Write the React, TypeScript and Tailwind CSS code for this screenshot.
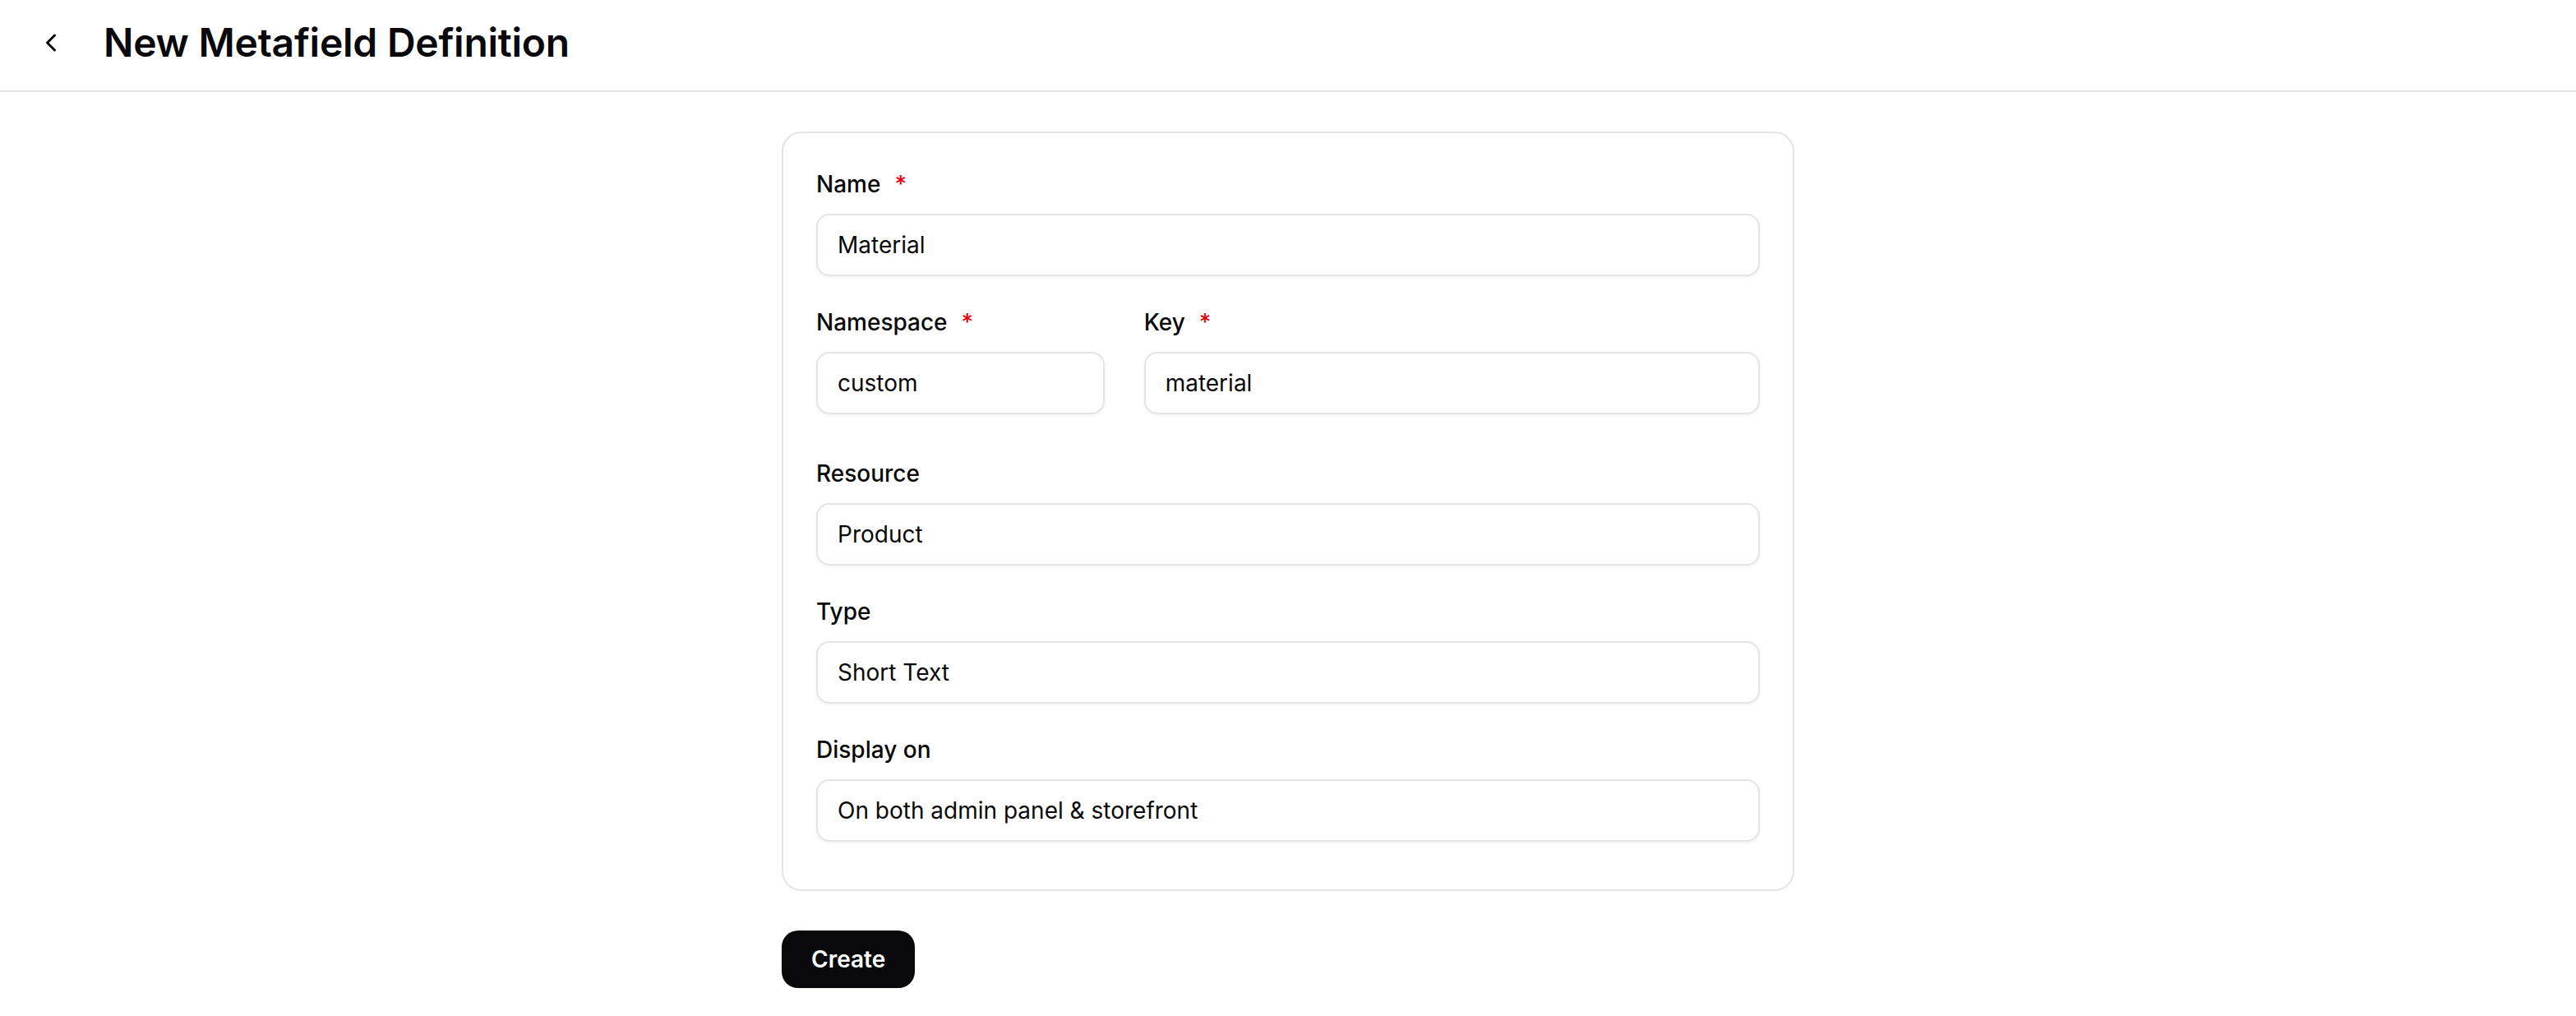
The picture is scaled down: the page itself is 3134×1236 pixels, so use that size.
import React from 'react';
import { ChevronLeft } from 'lucide-react';

interface Field {
  label: string;
  value: string;
  required?: boolean;
}

function Label({ label, required }: { label: string; required?: boolean }) {
  return (
    <label className="flex items-center text-[28px] font-medium leading-[40px]">
      {label}
      {required && <span className="ml-[17px] text-[#e7000b]">*</span>}
    </label>
  );
}

function TextField({ label, value, required }: Field) {
  return (
    <div className="flex flex-col gap-[16px]">
      <Label label={label} required={required} />
      <input
        readOnly
        value={value}
        className="h-[76px] w-full rounded-[16px] border-2 border-[#e4e4e7] bg-white px-[24px] text-[28px] text-[#09090b] shadow-[0_2px_4px_rgba(0,0,0,0.05)] outline-none"
      />
    </div>
  );
}

function App() {
  return (
    <div className="min-h-screen bg-white font-['Inter',sans-serif] text-[#09090b]">
      <header className="flex h-[112px] items-center border-b-2 border-[#e4e4e7] pb-[7px] pl-[44px]">
        <button className="flex items-center justify-center text-[#09090b]">
          <ChevronLeft size={36} strokeWidth={2} />
        </button>
        <h1 className="ml-[46px] text-[48px] font-semibold leading-none tracking-[-0.25px]">
          New Metafield Definition
        </h1>
      </header>

      <main className="mx-auto w-[1232px] pt-[48px]">
        <div className="flex flex-col gap-[36px] rounded-[24px] border-2 border-[#e4e4e7] px-[40px] pb-[58px] pt-[42px]">
          <TextField label="Name" value="Material" required />
          <div className="mb-[16px] grid grid-cols-3 gap-[48px]">
            <TextField label="Namespace" value="custom" required />
            <div className="col-span-2">
              <TextField label="Key" value="material" required />
            </div>
          </div>
          <TextField label="Resource" value="Product" />
          <TextField label="Type" value="Short Text" />
          <TextField label="Display on" value="On both admin panel & storefront" />
        </div>

        <button className="mt-[48px] h-[70px] rounded-[20px] bg-[#09090b] px-[36px] text-[28px] font-semibold text-white">
          Create
        </button>
      </main>
    </div>
  );
}

export default App;
